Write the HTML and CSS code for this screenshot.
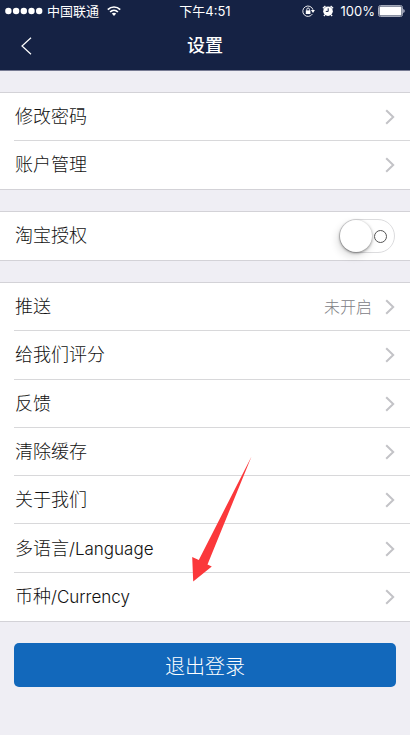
FILE: index.html
```html
<!DOCTYPE html>
<html lang="zh-CN">
<head>
<meta charset="utf-8">
<meta name="viewport" content="width=device-width, initial-scale=1">
<title>设置</title>
<link rel="stylesheet" href="styles.css">
</head>
<body>
<svg class="defs" aria-hidden="true">
  <symbol id="chevron" viewBox="0 0 10 16"><path d="M1.2 1.2 8.2 8 1.2 14.8" fill="none" stroke="currentColor" stroke-width="2"/></symbol>
</svg>
<header class="top">
  <div class="status">
    <div class="status-side">
      <svg class="signal" viewBox="0 0 38 8" aria-hidden="true"><g fill="#fff"><circle cx="3.4" cy="4" r="3.2"/><circle cx="11.1" cy="4" r="3.2"/><circle cx="18.8" cy="4" r="3.2"/><circle cx="26.5" cy="4" r="3.2"/><circle cx="34.2" cy="4" r="3.2"/></g></svg>
      <span>中国联通</span>
      <svg class="wifi" viewBox="0 0 14 10" aria-hidden="true"><g fill="none" stroke="#fff" stroke-width="1.7"><path d="M.8 3.6C4.3.1 9.7.1 13.2 3.6"/><path d="M3.1 6C5.3 3.8 8.7 3.8 10.9 6"/></g><path d="M4.8 7.6C6.1 6.5 7.9 6.5 9.2 7.6L7 9.9Z" fill="#fff"/></svg>
    </div>
    <time class="clock">下午4:51</time>
    <div class="status-side status-right">
      <svg class="lock" viewBox="0 0 13 12" aria-hidden="true"><path d="M10.4 9A5.2 5.2 0 1 1 11 4.8" fill="none" stroke="#fff" stroke-width=".9"/><path d="M8.9 5h4L11 8Z" fill="#fff"/><path d="M3.8 5.4h4.6V9H3.8Z" fill="#fff"/><path d="M4.8 5.8V4.3a1.3 1.3 0 0 1 2.6 0v1.5" fill="none" stroke="#fff" stroke-width=".9"/></svg>
      <svg class="alarm" viewBox="0 0 12 12" aria-hidden="true"><circle cx="6" cy="6.2" r="4.8" fill="#fff"/><path d="M.9 3.3 3.4 1.1M11.1 3.3 8.6 1.1M2.9 9.8 1.9 11M9.1 9.8l1 1.2" stroke="#fff" stroke-width="1.3"/><path d="M6.2 3.3v3.1H3.8" fill="none" stroke="#152244" stroke-width="1"/></svg>
      <span>100%</span>
      <svg class="battery" viewBox="0 0 27 12" aria-hidden="true"><rect x=".5" y=".5" width="24" height="11" rx="2" fill="none" stroke="#a3a9b9"/><rect x="1.5" y="1.5" width="22" height="9" rx="1" fill="#fff"/><path d="M25.4 4c1.6.5 1.6 3.5 0 4Z" fill="#dde"/></svg>
    </div>
  </div>
  <nav class="bar">
    <button class="back" type="button" aria-label="返回"><svg viewBox="0 0 11 18" aria-hidden="true"><path d="M10 .8 1 9l9 8.2" fill="none" stroke="#fff" stroke-width="1.2"/></svg></button>
    <h1 class="title">设置</h1>
  </nav>
</header>
<main class="settings">
  <ul class="group group-two">
    <li class="row"><a class="link" href="#password"><span>修改密码</span><svg class="chevron"><use href="#chevron"/></svg></a></li>
    <li class="row"><a class="link" href="#account"><span>账户管理</span><svg class="chevron"><use href="#chevron"/></svg></a></li>
  </ul>
  <ul class="group group-one">
    <li class="row"><label class="link" for="taobao"><span>淘宝授权</span><input class="switch" id="taobao" type="checkbox" role="switch"></label></li>
  </ul>
  <ul class="group group-seven">
    <li class="row"><a class="link" href="#push"><span>推送</span><span class="value">未开启</span><svg class="chevron"><use href="#chevron"/></svg></a></li>
    <li class="row"><a class="link" href="#rate"><span>给我们评分</span><svg class="chevron"><use href="#chevron"/></svg></a></li>
    <li class="row"><a class="link" href="#feedback"><span>反馈</span><svg class="chevron"><use href="#chevron"/></svg></a></li>
    <li class="row"><a class="link" href="#cache"><span>清除缓存</span><svg class="chevron"><use href="#chevron"/></svg></a></li>
    <li class="row"><a class="link" href="#about"><span>关于我们</span><svg class="chevron"><use href="#chevron"/></svg></a></li>
    <li class="row"><a class="link" href="#language"><span>多语言<span class="latin">/Language</span></span><svg class="chevron"><use href="#chevron"/></svg></a></li>
    <li class="row"><a class="link" href="#currency"><span>币种<span class="latin">/Currency</span></span><svg class="chevron"><use href="#chevron"/></svg></a>
      <svg class="pointer" viewBox="0 0 60 126" aria-hidden="true"><path d="M59.5.5 15.5 108.5 19.8 110.5 1.2 125.5.2 101 6.8 104Z" fill="#fb383b"/></svg>
    </li>
  </ul>
  <button class="logout" type="button">退出登录</button>
</main>
</body>
</html>
```

FILE: styles.css
```css
* { box-sizing: border-box; }

body {
  margin: 0;
  min-height: 100vh;
  background: #efeef4;
  color: #111;
  font-family: Inter, "Noto Sans CJK SC", sans-serif;
  font-size: 18px;
  font-weight: 300;
}

svg { display: block; flex: none; }
.defs { position: absolute; width: 0; height: 0; }

.top {
  background: #152244;
  color: #fff;
  border-bottom: 1px solid #777b93;
}

.status {
  display: flex;
  align-items: center;
  height: 22px;
  padding: 0 5px;
  font-size: 13px;
  font-weight: 400;
  line-height: 22px;
}

.status-side { display: flex; flex: 1; align-items: center; gap: 4px; }
.status-right { justify-content: flex-end; gap: 3px; }
.signal { width: 38px; height: 8px; }
.wifi { width: 14px; height: 10px; margin-left: 4px; }
.lock { width: 13px; height: 12px; }
.alarm { width: 12px; height: 12px; margin: 0 4px; }
.battery { width: 27px; height: 12px; }

.bar {
  display: grid;
  grid-template-columns: 52px 1fr 52px;
  align-items: center;
  height: 48px;
}

.back {
  display: flex;
  justify-content: center;
  padding: 12px 0;
  border: 0;
  background: none;
}
.back svg { width: 11px; height: 18px; }

.title {
  margin: 0;
  font-size: 18px;
  font-weight: 500;
  line-height: 24px;
  text-align: center;
}

.settings {
  display: flex;
  flex-direction: column;
  gap: 21px;
  padding: 21px 0;
}

.group {
  display: flex;
  flex-direction: column;
  margin: 0;
  padding: 0;
  list-style: none;
  background: #fff;
  border: solid #d3d2d7;
  border-width: 1px 0;
}
.group-one { min-height: 50px; }
.group-two { min-height: 98px; }
.group-seven { min-height: 340px; }

.row {
  position: relative;
  display: flex;
  flex: 1;
  margin-left: 14px;
}
.row + .row::before {
  content: "";
  position: absolute;
  top: -1px;
  left: 0;
  right: 0;
  height: 1px;
  background: #d8d8da;
}

.link {
  display: flex;
  flex: 1;
  align-items: center;
  justify-content: space-between;
  padding: 0 15px 0 1px;
  line-height: 24px;
  color: inherit;
  text-decoration: none;
}

.latin { font-size: 17px; }

.value {
  margin-left: auto;
  margin-right: 13px;
  color: #808085;
  font-size: 16px;
}

.chevron { width: 10px; height: 16px; color: #c3c3c7; }

.switch {
  appearance: none;
  position: relative;
  width: 56px;
  height: 34px;
  margin: 0;
  border: 1px solid #dcdcde;
  border-radius: 17px;
  background: #fff;
}
.switch::before {
  content: "";
  position: absolute;
  top: 0;
  left: 0;
  width: 32px;
  height: 32px;
  border-radius: 50%;
  background: #fff;
  box-shadow: 0 1px 3px rgba(0, 0, 0, 0.45), -2px 4px 8px rgba(0, 0, 0, 0.14);
}
.switch::after {
  content: "";
  position: absolute;
  top: 10px;
  right: 7px;
  width: 11px;
  height: 11px;
  border: 1px solid #555;
  border-radius: 50%;
}
.switch:checked { background: #4cd964; }
.switch:checked::before { left: 22px; }

.pointer {
  position: absolute;
  left: 178px;
  bottom: 39px;
  width: 60px;
  height: 126px;
  pointer-events: none;
}

.logout {
  height: 44px;
  margin: 0 14px;
  border: 0;
  border-radius: 5px;
  background: #1268bb;
  color: #fff;
  font: inherit;
  font-size: 20px;
}
```
